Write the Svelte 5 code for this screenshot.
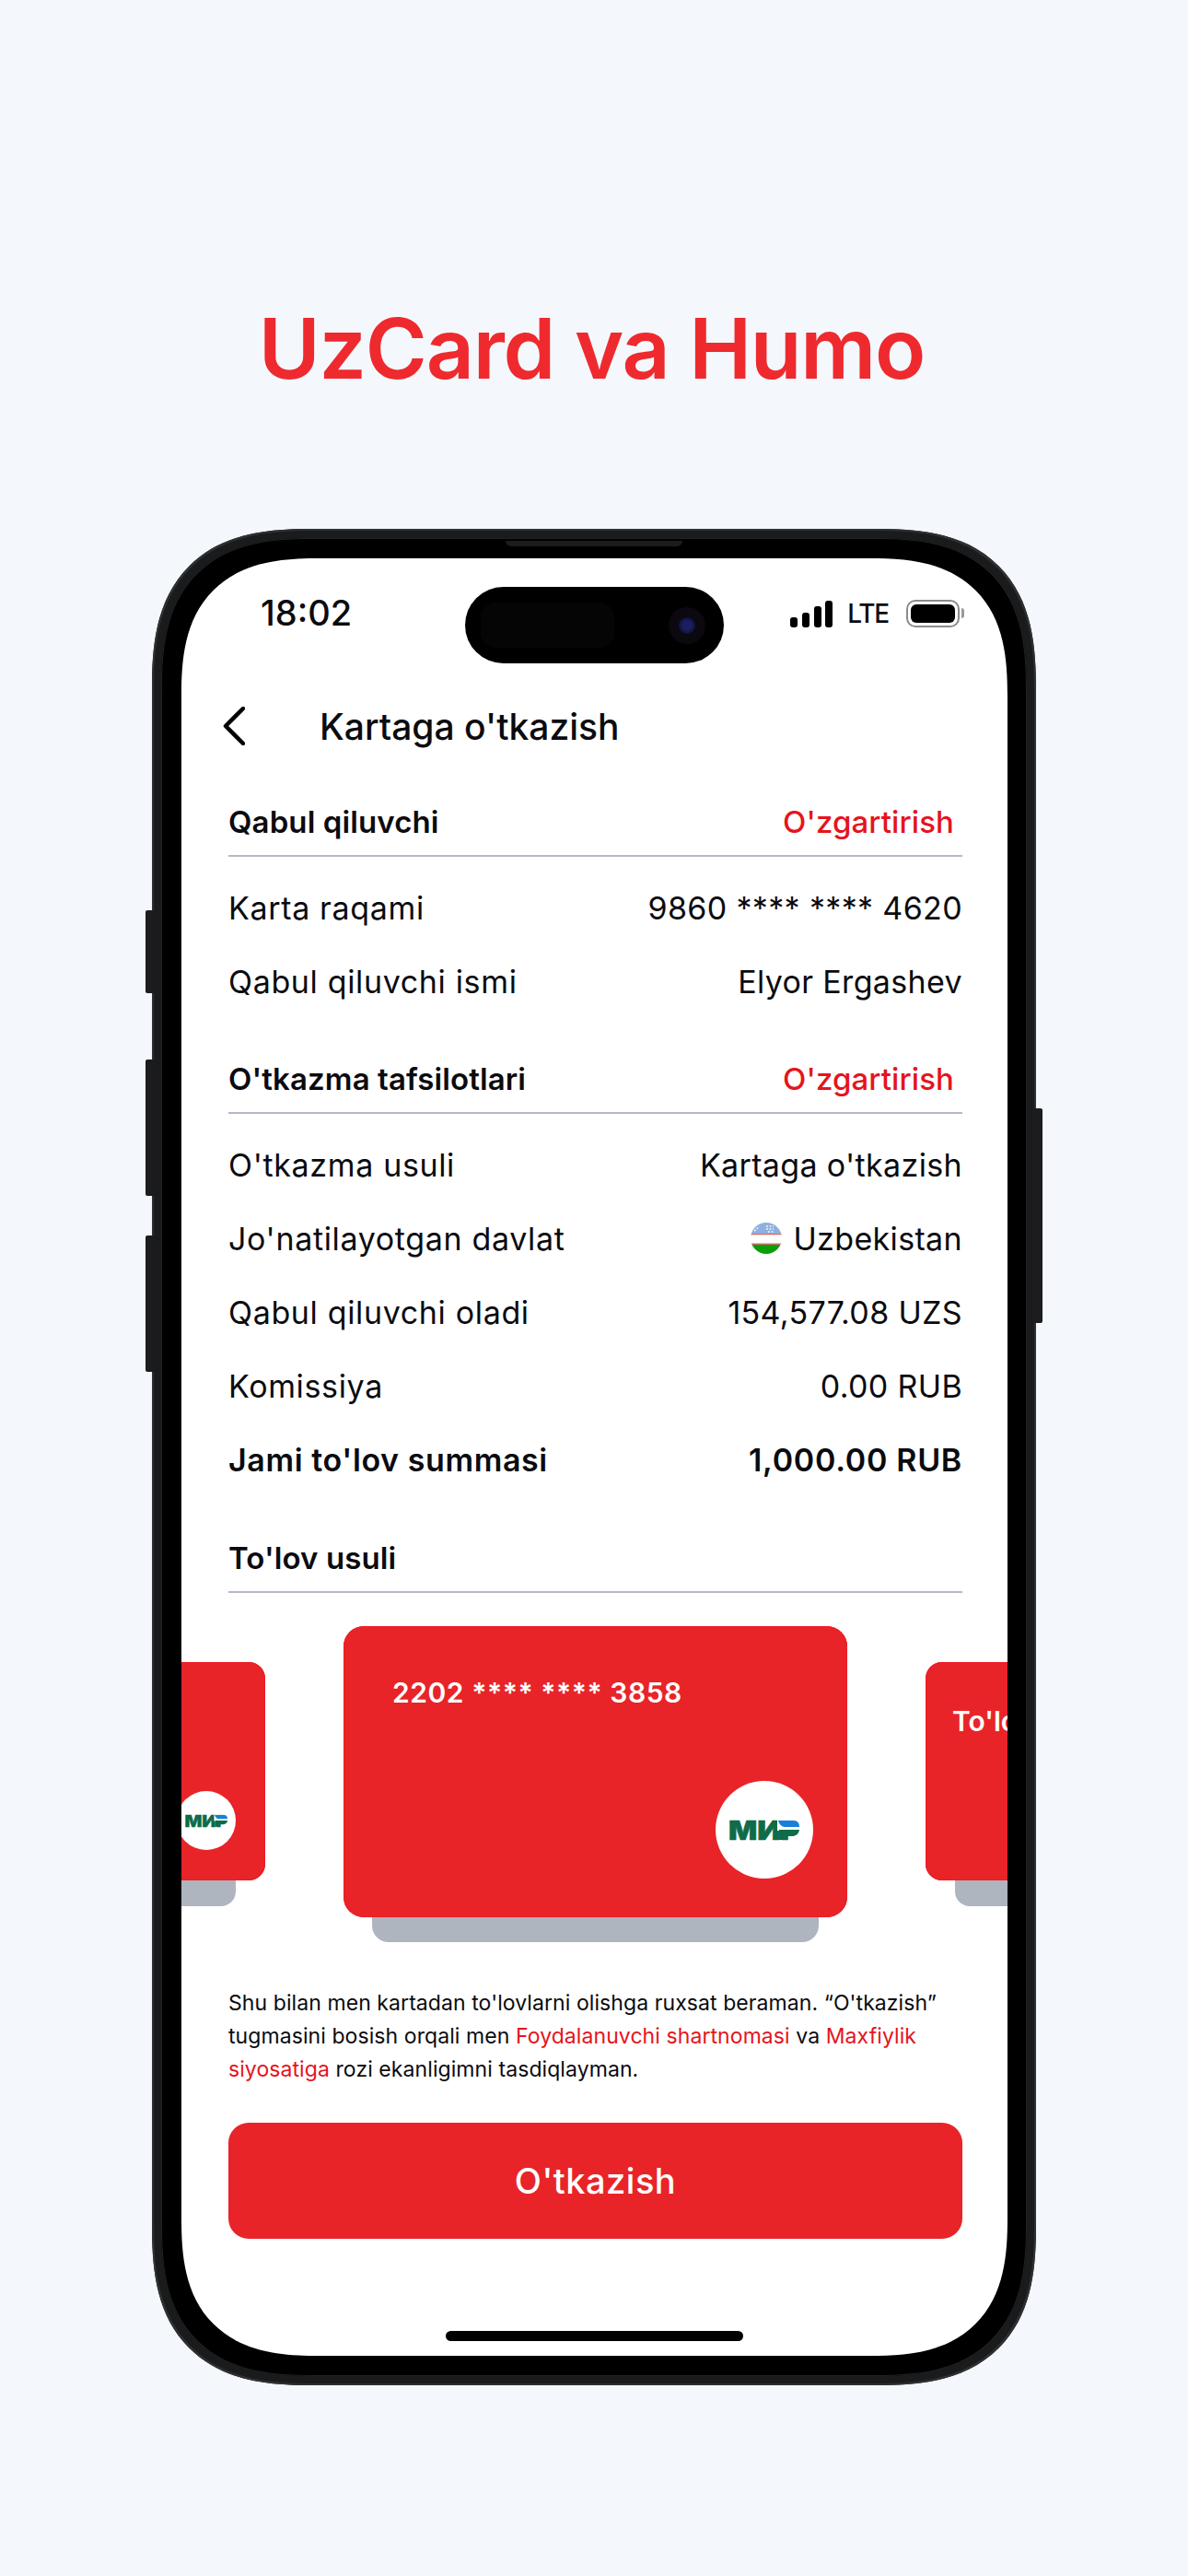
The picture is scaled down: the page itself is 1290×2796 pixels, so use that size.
<script>
	const recipient = [
		{ label: 'Karta raqami', value: '9860 **** **** 4620' },
		{ label: 'Qabul qiluvchi ismi', value: 'Elyor Ergashev' }
	];
	const details = [
		{ label: "O'tkazma usuli", value: "Kartaga o'tkazish" },
		{ label: "Jo'natilayotgan davlat", value: 'Uzbekistan', flag: true },
		{ label: 'Qabul qiluvchi oladi', value: '154,577.08 UZS' },
		{ label: 'Komissiya', value: '0.00 RUB' },
		{ label: "Jami to'lov summasi", value: '1,000.00 RUB', total: true }
	];
</script>

{#snippet mir(w)}
	<svg class="mir" width={w} viewBox="0 0 76 21" aria-label="Mir">
		<text x="-1" y="21" textLength="78" lengthAdjust="spacingAndGlyphs">МИР</text>
		<rect x="52" y="-1" width="26" height="12" fill="#fff" />
		<path d="M53 0h17c4 0 6 3 6 7H60c-3 0-6-3-7-7z" fill="#1a7fd8" />
		<path d="M54 10h22c-1 5-4 7-8 7h-6v4h-8z" fill="#0f6b48" />
	</svg>
{/snippet}

{#snippet row(r)}
	<div class="row" class:total={r.total}>
		<span>{r.label}</span>
		<span class="value">
			{#if r.flag}
				<svg class="flag" width="34" height="34" viewBox="0 0 34 34">
					<clipPath id="flag-clip"><circle cx="17" cy="17" r="17" /></clipPath>
					<g clip-path="url(#flag-clip)">
						<rect width="34" height="12" fill="#8fb0de" />
						<rect y="12" width="34" height="1.5" fill="#d96a6a" />
						<rect y="13.5" width="34" height="9" fill="#fff" />
						<rect y="22.5" width="34" height="1.5" fill="#d96a6a" />
						<rect y="24" width="34" height="10" fill="#0a9e0a" />
						<path d="M4 9c2-1 4-3 5-5M17 4h8M17 7h8M19 10h6" stroke="#eef3fb" stroke-width="1.6" stroke-dasharray="2 1.5" fill="none" />
					</g>
				</svg>
			{/if}
			{r.value}
		</span>
	</div>
{/snippet}

<div class="page">
	<h1>UzCard va Humo</h1>

	<div class="phone">
		<i class="btn b1"></i>
		<i class="btn b2"></i>
		<i class="btn b3"></i>
		<i class="btn b4"></i>
		<i class="speaker"></i>
		<div class="bezel">
			<div class="screen">
				<div class="status">
					<span class="time">18:02</span>
					<div class="island">
						<i class="sensor"></i>
						<i class="camera"><i></i></i>
					</div>
					<div class="indicators">
						<div class="signal"><i></i><i></i><i></i><i></i></div>
						<span class="lte">LTE</span>
						<div class="battery"><i></i></div>
					</div>
				</div>

				<div class="nav">
					<svg width="24" height="42" viewBox="0 0 24 42" fill="none">
						<path d="M22 2 3 21l19 19" stroke="#000" stroke-width="4.5" stroke-linecap="round" stroke-linejoin="round" />
					</svg>
					<span class="title">Kartaga o'tkazish</span>
				</div>

				<div class="content">
					<div class="head">
						<b>Qabul qiluvchi</b>
						<span class="edit">O'zgartirish</span>
					</div>
					<div class="rows">
						{#each recipient as r}
							{@render row(r)}
						{/each}
					</div>

					<div class="head second">
						<b>O'tkazma tafsilotlari</b>
						<span class="edit">O'zgartirish</span>
					</div>
					<div class="rows">
						{#each details as r}
							{@render row(r)}
						{/each}
					</div>

					<div class="head third">
						<b>To'lov usuli</b>
					</div>
				</div>

				<div class="carousel">
					<div class="card side">
						<div class="face">
							<span class="logo">{@render mir(46)}</span>
						</div>
						<i class="tray"></i>
					</div>
					<div class="card main">
						<div class="face">
							<span class="number">2202 **** **** 3858</span>
							<span class="logo">{@render mir(76)}</span>
						</div>
						<i class="tray"></i>
					</div>
					<div class="card side">
						<div class="face">
							<span class="name">To'lov usuli</span>
						</div>
						<i class="tray"></i>
					</div>
				</div>

				<div class="content">
					<p class="legal">
						Shu bilan men kartadan to'lovlarni olishga ruxsat beraman. “O'tkazish”
						tugmasini bosish orqali men <a href="#terms">Foydalanuvchi shartnomasi</a> va <a href="#privacy">Maxfiylik
						siyosatiga</a> rozi ekanligimni tasdiqlayman.
					</p>
					<button>O'tkazish</button>
				</div>

				<i class="home"></i>
			</div>
		</div>
	</div>
</div>

<style>
	:global(body) {
		margin: 0;
		background: #f4f8fc;
	}

	.page {
		width: 1290px;
		height: 2796px;
		display: flex;
		flex-direction: column;
		align-items: center;
		overflow: hidden;
		font-family: Inter, 'Noto Sans', sans-serif;
		color: #0b0b0f;
	}

	i {
		display: block;
	}

	h1 {
		margin: 318px 5px 136px 0;
		height: 120px;
		line-height: 120px;
		font-size: 91px;
		font-weight: 600;
		letter-spacing: -1.2px;
		color: #ee2a2e;
	}

	.phone {
		position: relative;
		width: 960px;
		height: 2015px;
		box-sizing: border-box;
		padding: 10px;
		border-radius: 175px;
		corner-shape: superellipse(1.4);
		background: #1a1b1c;
		box-shadow: inset 0 0 0 2px #2f3031;
	}

	.btn {
		position: absolute;
		width: 9px;
		background: #1c1c1e;
		border-radius: 2px 0 0 2px;
	}
	.b1 { left: -7px; top: 414px; height: 90px; }
	.b2 { left: -7px; top: 576px; height: 148px; }
	.b3 { left: -7px; top: 767px; height: 148px; }
	.b4 { right: -7px; top: 629px; height: 233px; border-radius: 0 2px 2px 0; }

	.speaker {
		position: absolute;
		left: 384px;
		top: 13px;
		width: 192px;
		height: 6px;
		border-radius: 0 0 6px 6px;
		background: #1c1c1c;
	}

	.bezel {
		height: 100%;
		box-sizing: border-box;
		padding: 22px 21px 22px 22px;
		border-radius: 165px;
		corner-shape: superellipse(1.4);
		background: #000;
		box-shadow: inset 0 0 0 1px #222;
	}

	.screen {
		height: 100%;
		display: flex;
		flex-direction: column;
		overflow: hidden;
		background: #fff;
		border-radius: 150px;
		corner-shape: superellipse(1.4);
	}

	.status {
		flex-shrink: 0;
		display: grid;
		grid-template-columns: 1fr 281px 1fr;
		padding-top: 31px;
	}

	.time {
		align-self: start;
		padding: 8px 0 0 86px;
		font-size: 38px;
		line-height: 40px;
		font-weight: 500;
	}

	.island {
		height: 83px;
		border-radius: 42px;
		background: #000;
		display: flex;
		align-items: center;
		justify-content: space-between;
		padding: 0 20px 0 17px;
	}

	.sensor {
		width: 145px;
		height: 49px;
		border-radius: 16px;
		background: #050505;
	}

	.camera {
		width: 40px;
		height: 40px;
		border-radius: 50%;
		background: #0b0810;
		display: flex;
		align-items: center;
		justify-content: center;
	}

	.camera i {
		width: 18px;
		height: 18px;
		border-radius: 50%;
		background: radial-gradient(circle, #1b1f5e 0 35%, #0e1140 70%);
	}

	.indicators {
		justify-self: end;
		align-self: start;
		display: flex;
		align-items: center;
		height: 30px;
		margin-top: 14px;
		padding-right: 52px;
	}

	.signal {
		display: flex;
		align-items: flex-end;
		gap: 4.6px;
		height: 29px;
	}

	.signal i {
		width: 8px;
		border-radius: 3px;
		background: #000;
	}
	.signal i:nth-child(1) { height: 11px; }
	.signal i:nth-child(2) { height: 16px; }
	.signal i:nth-child(3) { height: 23px; }
	.signal i:nth-child(4) { height: 29px; }

	.lte {
		margin-left: 16px;
		font-size: 28px;
		font-weight: 500;
		letter-spacing: -1.2px;
		line-height: 30px;
	}

	.battery {
		position: relative;
		margin-left: 19px;
		width: 58px;
		height: 30px;
		box-sizing: border-box;
		padding: 3px;
		border: 2px solid #8b8b8b;
		border-radius: 10px;
	}

	.battery::after {
		content: '';
		position: absolute;
		right: -7px;
		top: 7px;
		width: 3px;
		height: 11px;
		border-radius: 0 3px 3px 0;
		background: #9a9a9a;
	}

	.battery i {
		height: 100%;
		background: #000;
		border-radius: 6px;
	}

	.nav {
		flex-shrink: 0;
		display: flex;
		align-items: center;
		gap: 81px;
		height: 60px;
		margin-top: 38px;
		padding-left: 45px;
	}

	.title {
		font-size: 39px;
		font-weight: 500;
	}

	.content {
		flex-shrink: 0;
		padding: 0 49px 0 51px;
	}

	.head {
		display: flex;
		justify-content: space-between;
		align-items: center;
		height: 59px;
		margin-top: 44px;
		padding: 0 9px 7px 0;
		border-bottom: 2px solid #b3b9c5;
		font-size: 33px;
		letter-spacing: 0.1px;
	}

	.head b {
		font-weight: 600;
	}

	.head.second {
		margin-top: 36px;
	}

	.head.third {
		margin-top: 37px;
	}

	.edit {
		color: #e5141d;
		font-weight: 500;
	}

	.rows {
		margin-top: 15px;
	}

	.row {
		display: flex;
		justify-content: space-between;
		align-items: center;
		height: 80px;
		font-size: 34px;
		letter-spacing: 0.65px;
	}

	.row.total {
		font-weight: 600;
		letter-spacing: 0.6px;
	}

	.value {
		display: flex;
		align-items: center;
		gap: 12px;
		letter-spacing: 0.35px;
	}

	.row.total .value {
		letter-spacing: 0.7px;
	}

	.carousel {
		flex-shrink: 0;
		display: flex;
		justify-content: center;
		align-items: center;
		gap: 85px;
		height: 343px;
		margin-top: 36px;
		padding-left: 2px;
		overflow: hidden;
	}

	.card {
		flex-shrink: 0;
		display: flex;
		flex-direction: column;
		align-items: center;
	}

	.card.main { width: 547px; }
	.card.side { width: 410px; }

	.face {
		position: relative;
		width: 100%;
		box-sizing: border-box;
		background: #e82429;
		box-shadow: inset 0 0 0 1px #ee1c25;
		color: #fff;
		border-radius: 22px;
		flex-shrink: 0;
	}

	.main .face {
		height: 316px;
		padding: 54px 53px;
	}

	.side .face {
		height: 237px;
		padding: 46px 29px;
		border-radius: 18px;
	}

	.tray {
		background: #aeb5bf;
		flex-shrink: 0;
	}

	.main .tray {
		width: 485px;
		height: 27px;
		border-radius: 0 0 18px 18px;
	}

	.side .tray {
		width: 346px;
		height: 28px;
		border-radius: 0 0 16px 16px;
	}

	.number {
		font-size: 30px;
		font-weight: 600;
		line-height: 36px;
		letter-spacing: 0.55px;
		white-space: nowrap;
	}

	.name {
		font-size: 30px;
		font-weight: 600;
		line-height: 36px;
		white-space: nowrap;
	}

	.logo {
		position: absolute;
		display: flex;
		align-items: center;
		justify-content: center;
		background: #fff;
		border-radius: 50%;
	}

	.main .logo {
		right: 37px;
		bottom: 42px;
		width: 106px;
		height: 106px;
	}

	.side .logo {
		right: 32px;
		bottom: 33px;
		width: 64px;
		height: 64px;
	}

	.mir {
		display: block;
		overflow: visible;
	}

	.mir text {
		font-family: Inter, sans-serif;
		font-size: 28px;
		font-weight: 900;
		fill: #0f6b48;
		stroke: #0f6b48;
		stroke-width: 0.5px;
	}

	.legal {
		margin: 48px 0 0;
		font-size: 23px;
		letter-spacing: 0.08px;
		line-height: 36px;
		white-space: pre-line;
	}

	.legal a {
		color: #e5141d;
		text-decoration: none;
	}

	button {
		display: block;
		width: 100%;
		height: 126px;
		margin-top: 40px;
		border: none;
		border-radius: 22px;
		background: #e82429;
		color: #fff;
		font-family: inherit;
		font-size: 38px;
		font-weight: 500;
		letter-spacing: 0.5px;
	}

	.home {
		flex-shrink: 0;
		align-self: center;
		width: 323px;
		height: 11px;
		margin-top: 100px;
		border-radius: 6px;
		background: #000;
	}
</style>
